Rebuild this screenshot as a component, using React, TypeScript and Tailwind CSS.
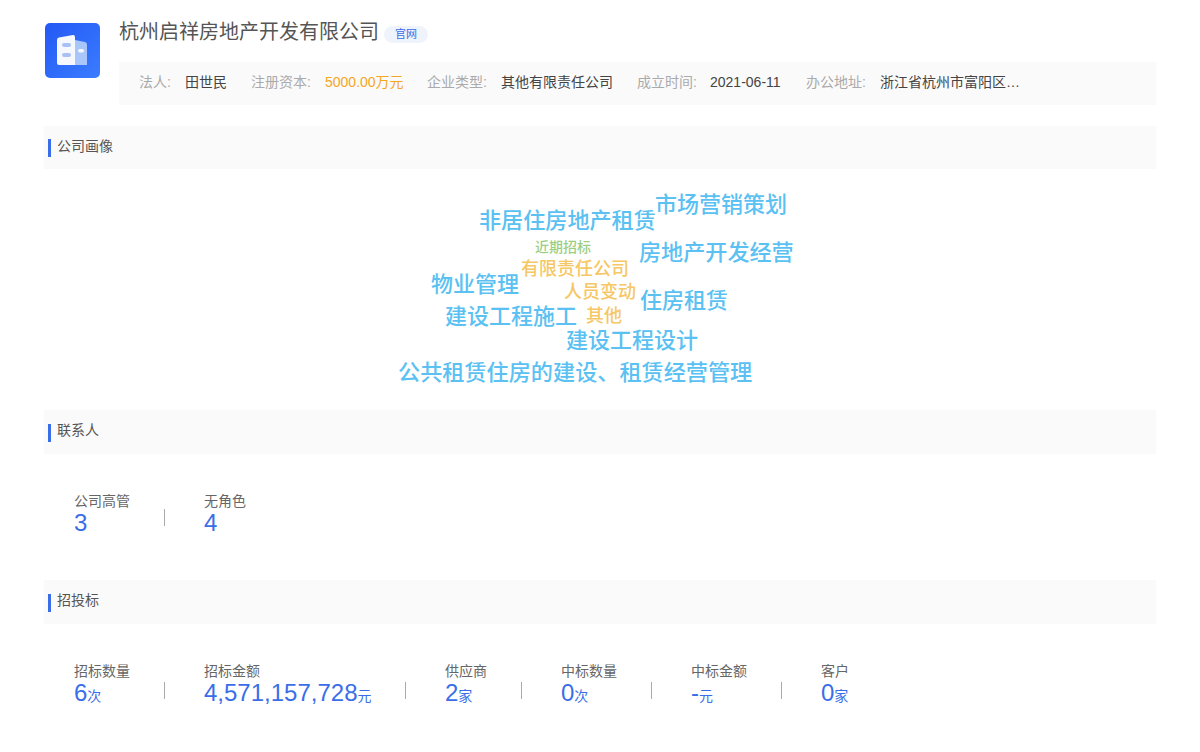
const font = { fontFamily: '"Liberation Sans","Noto Sans CJK SC",sans-serif' };

function SectionBar({ title, h = 43 }: { title: string; h?: number }) {
  return (
    <div className="bg-[#fafafa] flex items-center pl-1" style={{ height: h }}>
      <div className="w-[3px] h-[18px] bg-[#3a6ee8] mr-1.5 mt-[1px]" />
      <div className="text-[14px] leading-5 text-[#555] -mt-1">{title}</div>
    </div>
  );
}

function Stat({ label, value, unit, w, divider = true }: { label: string; value: string; unit?: string; w: number; divider?: boolean }) {
  return (
    <div className="flex items-end">
      <div style={{ width: w }}>
        <div className="text-[14px] leading-5 text-[#666]">{label}</div>
        <div className="text-[24px] leading-[24px] text-[#3a6ee8] whitespace-nowrap">
          {value}
          {unit && <span className="text-[14px]">{unit}</span>}
        </div>
      </div>
      {divider && <div className="w-px h-[17px] bg-[#aaa] mr-[39px] mb-[9px]" />}
    </div>
  );
}

const words: [string, number, number, number, string][] = [
  ['市场营销策划', 655, 205, 22, '#5ac1f2'],
  ['非居住房地产租赁', 479, 221, 22.1, '#5ac1f2'],
  ['近期招标', 535, 247, 14, '#9ccf83'],
  ['房地产开发经营', 639, 253, 22.1, '#5ac1f2'],
  ['有限责任公司', 521, 269, 18, '#f6c765'],
  ['物业管理', 431, 285, 22, '#5ac1f2'],
  ['人员变动', 564, 292, 18, '#f6c765'],
  ['住房租赁', 640, 301, 22, '#5ac1f2'],
  ['建设工程施工', 445, 317, 22, '#5ac1f2'],
  ['其他', 586, 316, 18, '#f6c765'],
  ['建设工程设计', 566, 341, 22, '#5ac1f2'],
  ['公共租赁住房的建设、租赁经营管理', 398, 373, 22.15, '#5ac1f2'],
];

export default function App() {
  return (
    <div className="w-[1200px] h-[752px] bg-white overflow-hidden px-11 pt-[18px]" style={font}>
      <div className="flex h-[87px]">
        <div className="w-[55px] h-[55px] mt-[5px] ml-px rounded-[5px] bg-gradient-to-br from-[#2458f5] to-[#3b7cff] shrink-0">
          <svg width="55" height="55" viewBox="0 0 55 55">
            <path d="M30 17 L40 19 Q42 19.5 42 21.5 V42 H30 Z" fill="#a9c6fb" />
            <path d="M12 17 Q12 15 14 14.6 L28 12 Q30 11.8 30 14 V42 H14 Q12 42 12 40 Z" fill="#f5f8ff" />
            <rect x="17" y="20" width="9" height="4" rx="2" fill="#a9c0f6" />
            <rect x="17" y="30" width="9" height="4" rx="2" fill="#a9c0f6" />
            <rect x="33" y="26" width="6" height="3.5" rx="1.7" fill="#f5f8ff" />
          </svg>
        </div>
        <div className="flex-1 ml-[19px]">
          <div className="flex items-center h-[27px]">
            <span className="text-[20px] leading-[27px] text-[#555] mt-px">杭州启祥房地产开发有限公司</span>
            <span className="ml-[5px] mt-[6px] w-[44px] h-[17px] rounded-full bg-[#eff3fb] text-[#3a6ee8] text-[11px] leading-[17px] text-center">官网</span>
          </div>
          <div className="mt-[17px] h-[43px] bg-[#fafafa] flex items-center pl-5 pb-0.5 text-[14px] whitespace-nowrap">
            <span className="text-[#aaa] w-[46px]">法人:</span>
            <span className="text-[#444] w-[66px]">田世民</span>
            <span className="text-[#aaa] w-[74px]">注册资本:</span>
            <span className="text-[#f5a623] w-[102px]">5000.00万元</span>
            <span className="text-[#aaa] w-[74px]">企业类型:</span>
            <span className="text-[#444] w-[136px]">其他有限责任公司</span>
            <span className="text-[#aaa] w-[73px]">成立时间:</span>
            <span className="text-[#444] w-[96px]">2021-06-11</span>
            <span className="text-[#aaa] w-[74px]">办公地址:</span>
            <span className="text-[#444]">浙江省杭州市富阳区…</span>
          </div>
        </div>
      </div>

      <div className="mt-[21px]"><SectionBar title="公司画像" /></div>

      <div className="relative h-[241px] -mx-11">
        {words.map(([t, x, y, s, c]) => (
          <span
            key={t}
            className="absolute whitespace-nowrap font-medium"
            style={{ left: x, top: y - 169 - s / 2, fontSize: s, lineHeight: `${s}px`, color: c }}
          >
            {t}
          </span>
        ))}
      </div>

      <SectionBar title="联系人" h={44} />
      <div className="h-[126px] flex items-start pl-[30px] pt-[37px]">
        <Stat label="公司高管" value="3" w={90} />
        <Stat label="无角色" value="4" w={90} divider={false} />
      </div>

      <SectionBar title="招投标" h={44} />
      <div className="flex items-start pl-[30px] pt-[37px]">
        <Stat label="招标数量" value="6" unit="次" w={90} />
        <Stat label="招标金额" value="4,571,157,728" unit="元" w={201} />
        <Stat label="供应商" value="2" unit="家" w={76} />
        <Stat label="中标数量" value="0" unit="次" w={90} />
        <Stat label="中标金额" value="-" unit="元" w={90} />
        <Stat label="客户" value="0" unit="家" w={90} divider={false} />
      </div>
    </div>
  );
}
